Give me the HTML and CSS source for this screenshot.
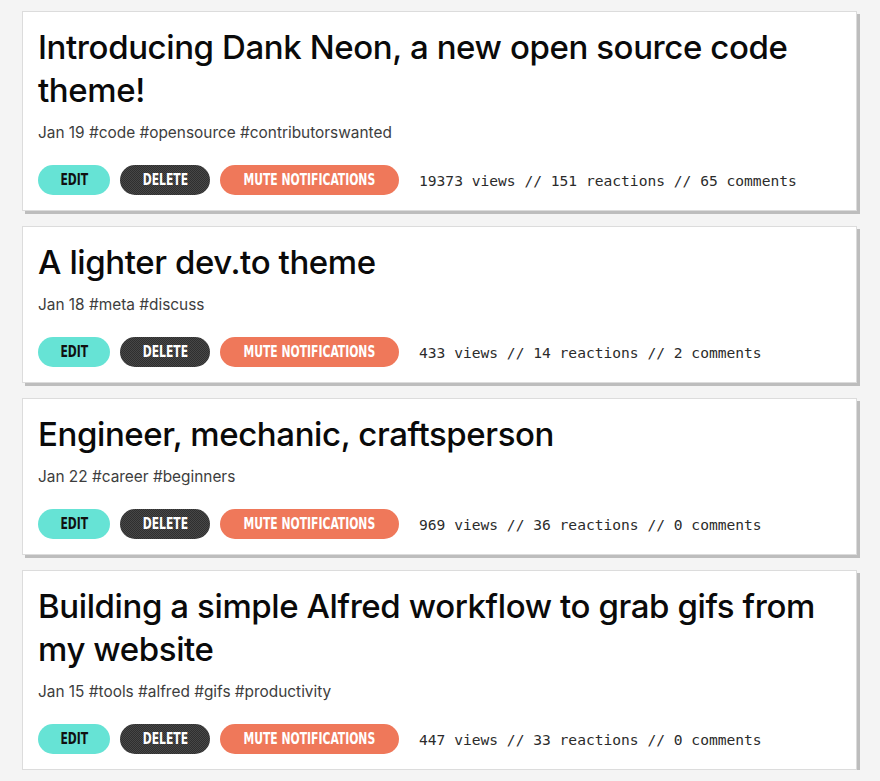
FILE: index.html
```html
<!DOCTYPE html>
<html lang="en">
<head>
<meta charset="utf-8">
<title>Dashboard posts</title>
<link rel="stylesheet" href="styles.css">
</head>
<body>
<main class="list">
  <article class="card">
    <h2 class="title">Introducing Dank Neon, a new open source code theme!</h2>
    <div class="meta">Jan 19 #code #opensource #contributorswanted</div>
    <div class="actions">
      <button class="btn btn-edit"><span class="btn-label">EDIT</span></button>
      <button class="btn btn-delete"><span class="btn-label">DELETE</span></button>
      <button class="btn btn-mute"><span class="btn-label">MUTE NOTIFICATIONS</span></button>
      <span class="stats">19373 views // 151 reactions // 65 comments</span>
    </div>
  </article>
  <article class="card">
    <h2 class="title">A lighter dev.to theme</h2>
    <div class="meta">Jan 18 #meta #discuss</div>
    <div class="actions">
      <button class="btn btn-edit"><span class="btn-label">EDIT</span></button>
      <button class="btn btn-delete"><span class="btn-label">DELETE</span></button>
      <button class="btn btn-mute"><span class="btn-label">MUTE NOTIFICATIONS</span></button>
      <span class="stats">433 views // 14 reactions // 2 comments</span>
    </div>
  </article>
  <article class="card">
    <h2 class="title">Engineer, mechanic, craftsperson</h2>
    <div class="meta">Jan 22 #career #beginners</div>
    <div class="actions">
      <button class="btn btn-edit"><span class="btn-label">EDIT</span></button>
      <button class="btn btn-delete"><span class="btn-label">DELETE</span></button>
      <button class="btn btn-mute"><span class="btn-label">MUTE NOTIFICATIONS</span></button>
      <span class="stats">969 views // 36 reactions // 0 comments</span>
    </div>
  </article>
  <article class="card">
    <h2 class="title">Building a simple Alfred workflow to grab gifs from my website</h2>
    <div class="meta">Jan 15 #tools #alfred #gifs #productivity</div>
    <div class="actions">
      <button class="btn btn-edit"><span class="btn-label">EDIT</span></button>
      <button class="btn btn-delete"><span class="btn-label">DELETE</span></button>
      <button class="btn btn-mute"><span class="btn-label">MUTE NOTIFICATIONS</span></button>
      <span class="stats">447 views // 33 reactions // 0 comments</span>
    </div>
  </article>
</main>
</body>
</html>
```
FILE: styles.css
```css
html, body {
  margin: 0;
  padding: 0;
  background: #f4f4f4;
}
body {
  font-family: Inter, "Noto Sans", "Liberation Sans", sans-serif;
  color: #0a0a0a;
}
.list {
  display: flex;
  flex-direction: column;
  gap: 15px;
  padding: 11px 23px 0 22px;
}
.card {
  background: #fff;
  border: 1px solid #dcdcdc;
  box-shadow: 3px 3px 0 #bdbdbd;
  padding: 14px 15px 15px;
}
.title {
  margin: 0;
  font-size: 33px;
  line-height: 43px;
  font-weight: 500;
  letter-spacing: -0.4px;
}
.meta {
  margin-top: 10px;
  font-size: 15.4px;
  line-height: 22px;
  color: #3d3d3d;
}
.actions {
  margin-top: 21px;
  display: flex;
  align-items: center;
  gap: 10px;
  white-space: nowrap;
}
.btn {
  flex: 0 0 auto;
  height: 30px;
  border: none;
  border-radius: 15px;
  padding: 0;
  display: flex;
  align-items: center;
  justify-content: center;
  font-family: "DejaVu Sans Condensed", "Liberation Sans", sans-serif;
  font-weight: bold;
  font-size: 15px;
  line-height: 30px;
  cursor: pointer;
}
.btn-label {
  display: inline-block;
  transform: scaleX(0.8);
  white-space: nowrap;
}
.btn-edit {
  width: 72px;
  background: #66e3d5;
  color: #111;
}
.btn-delete {
  width: 90px;
  background: repeating-conic-gradient(#2f2f2f 0 25%, #474747 0 50%) 0 0 / 2px 2px;
  color: #fff;
}
.btn-mute {
  width: 179px;
  background: #ef785a;
  color: #fff;
}
.stats {
  margin-left: 10px;
  font-family: "DejaVu Sans Mono", "Liberation Mono", monospace;
  font-size: 14.6px;
  color: #2b2b2b;
}
```
